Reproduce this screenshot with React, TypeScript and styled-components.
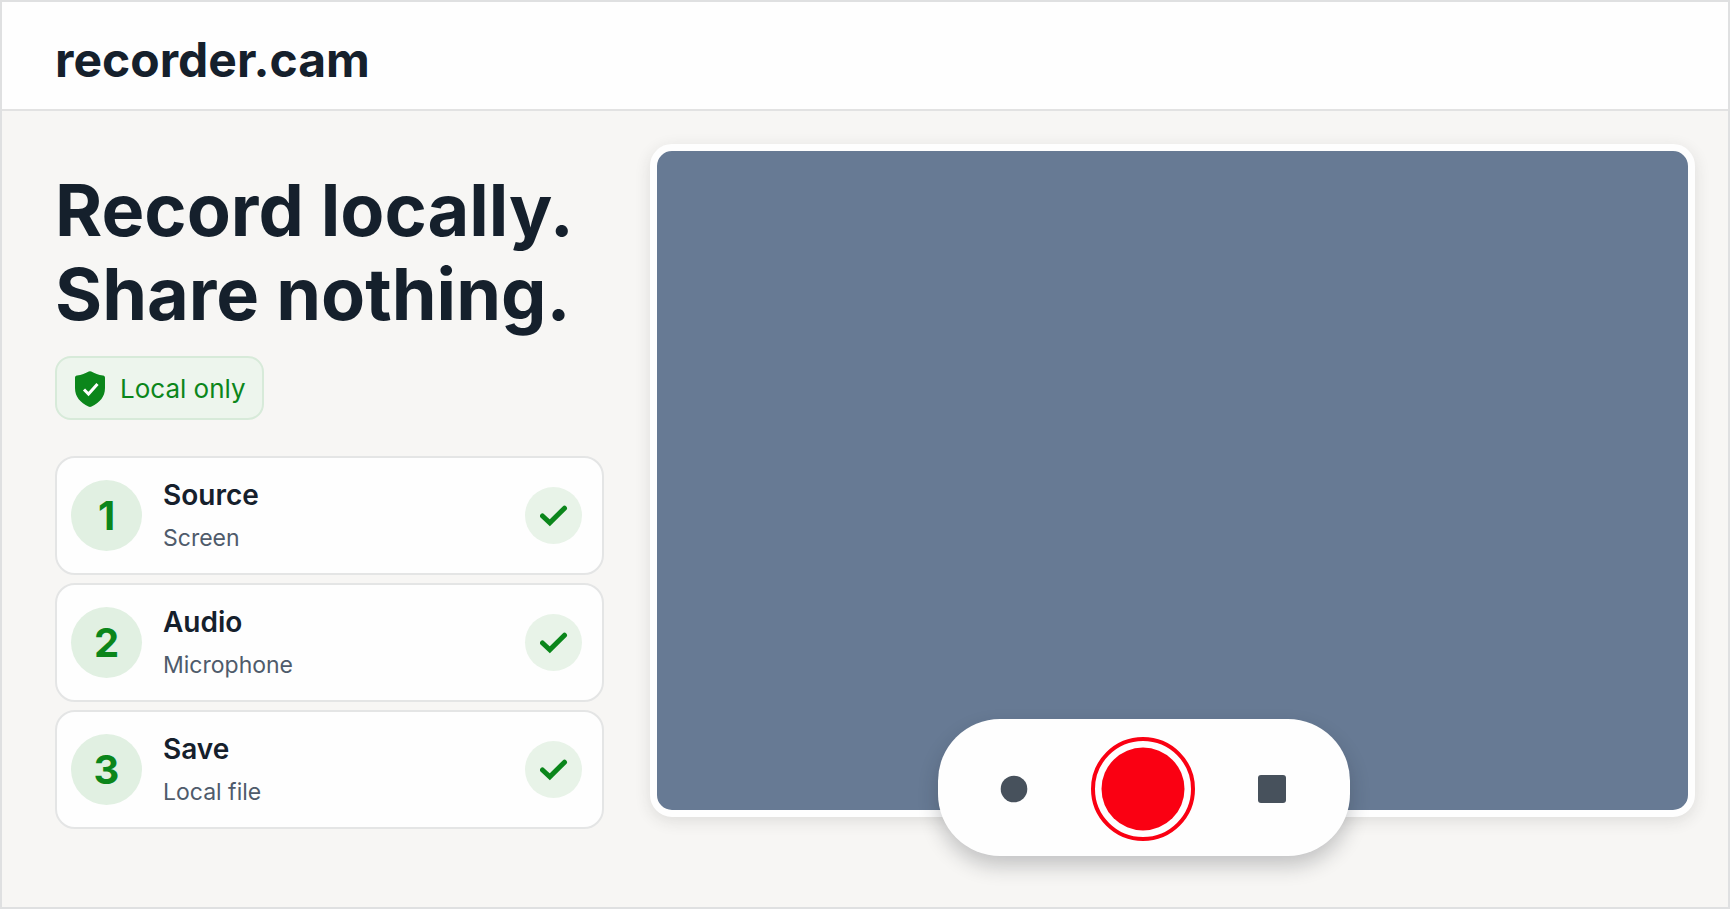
import React from "react";
import styled, { createGlobalStyle } from "styled-components";

const GlobalStyle = createGlobalStyle`
  *, *::before, *::after { box-sizing: border-box; }
  body {
    margin: 0;
    background: #f7f6f4;
    color: #15202c;
    font-family: Inter, "Liberation Sans", sans-serif;
  }
  h1, h2, p, ol { margin: 0; padding: 0; }
`;

const Page = styled.div`
  display: flex;
  flex-direction: column;
  min-height: 100vh;
  border: 2px solid #dfe0e1;
`;

const Header = styled.header`
  display: flex;
  align-items: center;
  padding: 28px 53px 19px;
  border-bottom: 2px solid #e2e2e2;
  background: #fefefe;
`;

const Brand = styled.a`
  color: inherit;
  font-size: 48px;
  font-weight: 700;
  line-height: 60px;
  text-decoration: none;
`;

const Main = styled.main`
  flex: 1;
  display: grid;
  grid-template-columns: minmax(0, 549fr) minmax(0, 1045fr);
  column-gap: 46px;
  padding: 33px 33px 32px 53px;
`;

const Intro = styled.section`
  display: flex;
  flex-direction: column;
  align-items: flex-start;
`;

const Headline = styled.h1`
  margin-top: 24px;
  font-size: 72px;
  font-weight: 700;
  line-height: 84px;
  white-space: nowrap;
`;

const Badge = styled.p`
  display: flex;
  align-items: center;
  gap: 15px;
  height: 64px;
  margin-top: 20px;
  padding: 1px 16px 0 18px;
  border: 2px solid #d7ead9;
  border-radius: 16px;
  background: #edf5ed;
  color: #0b861b;
  font-size: 26px;
  line-height: 32px;
`;

const Steps = styled.ol`
  display: flex;
  flex-direction: column;
  gap: 8px;
  width: 100%;
  margin-top: 36px;
  list-style: none;
`;

const Step = styled.li`
  display: flex;
  align-items: center;
  gap: 21px;
  height: 119px;
  padding: 0 20px 0 14px;
  border: 2px solid #e4e5e5;
  border-radius: 20px;
  background: #fefefe;
`;

const Disc = styled.span<{ $size: number; $tint: string }>`
  display: flex;
  flex: none;
  align-items: center;
  justify-content: center;
  width: ${(p) => p.$size}px;
  height: ${(p) => p.$size}px;
  border-radius: 50%;
  background: ${(p) => p.$tint};
  color: #0b861b;
  font-size: 40px;
  font-weight: 700;
  line-height: 48px;
`;

const StepText = styled.div`
  flex: 1;
`;

const StepTitle = styled.h2`
  font-size: 28px;
  font-weight: 600;
  line-height: 44px;
`;

const StepValue = styled.p`
  color: #4f5b6b;
  font-size: 23px;
  line-height: 42px;
`;

const Stage = styled.section`
  position: relative;
  padding-bottom: 58px;
`;

const Preview = styled.div`
  height: 100%;
  min-height: 320px;
  border: 7px solid #fefefe;
  border-radius: 22px;
  background: #677a94;
  box-shadow: 0 4px 16px rgba(40, 40, 40, 0.12);
`;

const Controls = styled.div`
  position: absolute;
  bottom: 19px;
  left: calc(50% - 29px);
  display: flex;
  align-items: center;
  justify-content: space-between;
  width: 412px;
  height: 137px;
  padding: 2px 64px 0 62px;
  border-radius: 62px;
  background: #fefefe;
  box-shadow: 0 10px 20px rgba(30, 35, 40, 0.24);
  transform: translateX(-50%);
`;

const IconButton = styled.button`
  display: flex;
  padding: 0;
  border: 0;
  background: none;
  cursor: pointer;
`;

const steps = [
  { title: "Source", value: "Screen" },
  { title: "Audio", value: "Microphone" },
  { title: "Save", value: "Local file" },
];

const ShieldIcon = () => (
  <svg width="30" height="36" viewBox="0 0 30 36" aria-hidden="true">
    <path
      d="M13.8.4a3 3 0 0 1 2.4 0C19.5 2.2 23.6 3.8 28 4.6c1.3.2 2 1 2 2.2V17c0 9-5.5 14.6-13.4 18.5a3.5 3.5 0 0 1-3.2 0C5.5 31.6 0 26 0 17V6.8c0-1.2.7-2 2-2.2C6.4 3.8 10.5 2.2 13.8.4Z"
      fill="#0b861b"
    />
    <path d="m9 18.5 4.500 4.500 9-10" fill="none" stroke="#fff" strokeWidth="3" />
  </svg>
);

const CheckIcon = () => (
  <svg width="28" height="22" viewBox="0 0 28 22" aria-hidden="true">
    <path
      d="m2.500 11 7.300 6.800L24.500 3.200"
      fill="none"
      stroke="#0b861b"
      strokeWidth="5"
      strokeLinecap="round"
      strokeLinejoin="miter"
    />
  </svg>
);

const App = () => (
  <>
    <GlobalStyle />
    <Page>
      <Header>
        <Brand href="#">recorder.cam</Brand>
      </Header>
      <Main>
        <Intro>
          <Headline>
            Record locally.
            <br />
            Share nothing.
          </Headline>
          <Badge>
            <ShieldIcon />
            Local only
          </Badge>
          <Steps>
            {steps.map((step, i) => (
              <Step key={step.title}>
                <Disc $size={71} $tint="#e1f0e2">{i + 1}</Disc>
                <StepText>
                  <StepTitle>{step.title}</StepTitle>
                  <StepValue>{step.value}</StepValue>
                </StepText>
                <Disc $size={57} $tint="#e8f3e8">
                  <CheckIcon />
                </Disc>
              </Step>
            ))}
          </Steps>
        </Intro>
        <Stage aria-label="Preview">
          <Preview />
          <Controls>
            <IconButton type="button" aria-label="Snapshot">
              <svg width="28" height="28" viewBox="0 0 28 28">
                <circle cx="14" cy="14" r="13.300" fill="#47515c" />
              </svg>
            </IconButton>
            <IconButton type="button" aria-label="Record">
              <svg width="104" height="104" viewBox="0 0 104 104">
                <circle cx="52" cy="52" r="50" fill="none" stroke="#fa0012" strokeWidth="4" />
                <circle cx="52" cy="52" r="41.500" fill="#fa0012" />
              </svg>
            </IconButton>
            <IconButton type="button" aria-label="Stop">
              <svg width="28" height="28" viewBox="0 0 28 28">
                <rect width="28" height="28" rx="3" fill="#47515c" />
              </svg>
            </IconButton>
          </Controls>
        </Stage>
      </Main>
    </Page>
  </>
);

export default App;
